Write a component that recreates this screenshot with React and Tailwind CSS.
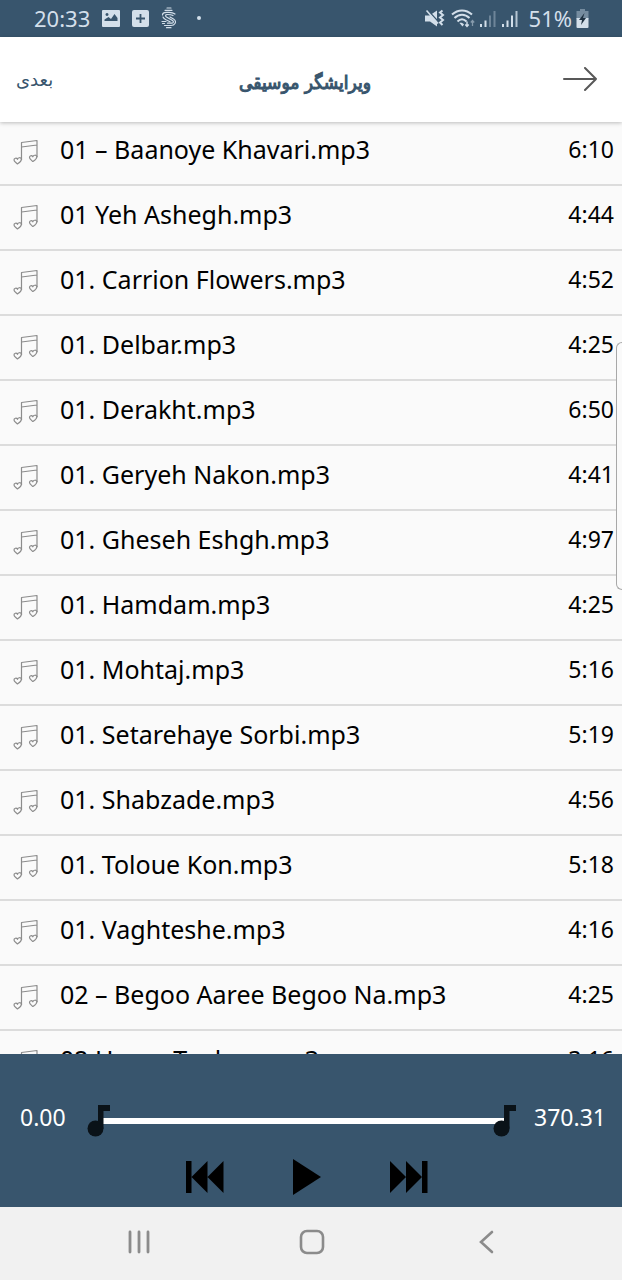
// ──────────────────────────────────────────────────
// App.jsx — Music editor: pick a track and trim it
// ──────────────────────────────────────────────────
// Top to bottom: phone status bar, page header, the
// scrolling track list, the trim player and the
// system navigation bar.
// ──────────────────────────────────────────────────

import { useState } from 'react';

const TRACKS = [
  { name: '01 – Baanoye Khavari.mp3', time: '6:10' },
  { name: '01 Yeh Ashegh.mp3', time: '4:44' },
  { name: '01. Carrion Flowers.mp3', time: '4:52' },
  { name: '01. Delbar.mp3', time: '4:25' },
  { name: '01. Derakht.mp3', time: '6:50' },
  { name: '01. Geryeh Nakon.mp3', time: '4:41' },
  { name: '01. Gheseh Eshgh.mp3', time: '4:97' },
  { name: '01. Hamdam.mp3', time: '4:25' },
  { name: '01. Mohtaj.mp3', time: '5:16' },
  { name: '01. Setarehaye Sorbi.mp3', time: '5:19' },
  { name: '01. Shabzade.mp3', time: '4:56' },
  { name: '01. Toloue Kon.mp3', time: '5:18' },
  { name: '01. Vaghteshe.mp3', time: '4:16' },
  { name: '02 – Begoo Aaree Begoo Na.mp3', time: '4:25' },
  { name: '02 Hosse Tanhoe.mp3', time: '3:16' },
];

const DURATION = 370.31;

// ── Status Bar ────────────────────────────────────
const StatusBar = () => (
  <div className="flex h-[37px] shrink-0 items-center justify-between bg-[#38556d] pr-8 pb-px pl-[34px] text-[22px] leading-none text-[#d3dfea]">
    <div className="flex items-center gap-3">
      <span>20:33</span>

      {/* Picture */}
      <svg width="18" height="17" viewBox="0 0 18 17" aria-hidden="true">
        <path
          fill="currentColor"
          fillRule="evenodd"
          d="M1 0h16a1 1 0 0 1 1 1v15a1 1 0 0 1-1 1H1a1 1 0 0 1-1-1V1a1 1 0 0 1 1-1ZM2.500 11h13V8l-3-4-3.500 5-2.500-2-4 2.500ZM5 3a1.500 1.500 0 1 0 .01 0Z"
        />
      </svg>

      {/* Plus tile */}
      <svg width="17" height="17" viewBox="0 0 17 17" aria-hidden="true">
        <rect width="17" height="17" rx="2" fill="currentColor" />
        <path d="M8.500 4v9M4 8.500h9" stroke="#38556d" strokeWidth="1.800" />
      </svg>

      {/* Striped S */}
      <svg width="16" height="22" viewBox="0 0 16 22" fill="none" stroke="currentColor" strokeWidth="1.200" strokeLinecap="round" aria-hidden="true">
        <path d="M6 1h4M4 3.300h7" />
        <path d="M14 7C12.500 5.800 10.500 5.300 8 5.300H5.500C3.500 5.300 1.500 6 1.500 8" />
        <path d="M12 8.500C10.500 7.500 8 7.500 6 7.500 4.500 7.500 4 9 5.500 10l6 3.500c1.500 1 1 2.700-.5 2.700H6.500" />
        <path d="M2 10c.5 1.500 1.500 2 3 2.800l4 2M9 10l3.500 2c2 1.200 2.500 3 1.500 4.500-.8 1.500-2 2-4 2H3.500" />
        <path d="M1 14.500h4M1.500 16.500h2M5.500 20.700h4.500" />
      </svg>

      <span className="ml-2 size-1 rounded-full bg-[#d3dfea]" />
    </div>

    <div className="flex items-center gap-1">
      {/* Muted, vibrating */}
      <svg width="20" height="19" viewBox="0 0 20 19" aria-hidden="true">
        <path fill="currentColor" d="M0 6.500h4.500L12 1.500v16l-7-5H0Z" />
        <path d="M2.500 1l12 13" stroke="#38556d" strokeWidth="1.600" />
        <path d="M1.500 1.500l11.500 13" stroke="currentColor" strokeWidth="1.600" />
        <path d="M17.500 1.500l-2.500 2 3 2.500-3 2.500 3 2.500-3 2.500 2.500 2.500" fill="none" stroke="currentColor" strokeWidth="2" />
      </svg>

      {/* Wi-Fi */}
      <svg className="ml-0.5" width="24" height="19" viewBox="0 0 24 19" fill="none" stroke="currentColor" strokeWidth="2" aria-hidden="true">
        <path d="M1 5.500c6-5.500 14-5.500 20 0M3.500 9c4.500-4.500 10.500-4.500 15 0M6.500 12.500c3-3 6-3 9 0" />
        <path d="M8.500 14l3 3.500 1.500-2c-1-1.500-3-2-4.500-1.500Z" fill="currentColor" stroke="none" />
        <path d="M16 12.500v4.500M14.300 15.500l1.700 2 1.700-2" strokeWidth="1.400" />
        <path d="M21.500 17v-5M19.800 13.500l1.700-2 1.700 2" strokeWidth="1.300" opacity=".5" />
      </svg>

      {/* Signal, one set of bars for each SIM */}
      <svg width="18" height="17" viewBox="0 0 18 17" fill="currentColor" aria-hidden="true">
        <path d="M1 14h2v3H1ZM5.500 10.500h2V17h-2Z" />
        <path d="M10 5.500h2V17h-2ZM14.500 1h2v16h-2Z" opacity=".35" />
      </svg>
      <svg width="18" height="17" viewBox="0 0 18 17" fill="currentColor" aria-hidden="true">
        <path d="M1 14h2v3H1ZM5.500 10.500h2V17h-2ZM10 5.500h2V17h-2Z" />
        <path d="M14.500 1h2v16h-2Z" opacity=".8" />
      </svg>

      <span className="ml-1.5">51%</span>

      {/* Battery, charging */}
      <svg width="14" height="19" viewBox="0 0 14 19" aria-hidden="true">
        <path d="M4 0h5v2h3.500v8H.5V2H4Z" fill="currentColor" opacity=".4" />
        <path d="M.5 9h12v9a1 1 0 0 1-1 1h-10a1 1 0 0 1-1-1Z" fill="currentColor" />
        <path d="M8.500 4L3 11h3l-1 5 5-7H7Z" fill="#1f3242" />
      </svg>
    </div>
  </div>
);

// ── Page Header ───────────────────────────────────
// Three columns, so the title stays in the middle
// whatever stands at its sides.
const Header = () => (
  <header className="relative z-10 grid h-[85px] shrink-0 grid-cols-3 items-center bg-white px-4 font-['DejaVu_Sans',sans-serif] text-[#38556d] shadow-[0_1px_4px_rgba(0,0,0,0.25)]">
    <button type="button" lang="fa" className="justify-self-start text-[18px]">
      بعدی
    </button>
    <h1 lang="fa" dir="rtl" className="mr-3 justify-self-center pt-1 font-['DejaVu_Sans_Condensed','DejaVu_Sans',sans-serif] text-[19px] leading-7 font-normal whitespace-nowrap [-webkit-text-stroke:1px_#38556d]">
      ویرایشگر موسیقی
    </h1>
    <button type="button" aria-label="Back" className="justify-self-end pr-2 text-[#585858]">
      <svg width="36" height="26" viewBox="0 0 36 26" fill="none" stroke="currentColor" strokeWidth="2" strokeLinecap="round" strokeLinejoin="round" aria-hidden="true">
        <path d="M2 12h32M23 1l11 11-11 11" />
      </svg>
    </button>
  </header>
);

// ── Track Row ─────────────────────────────────────
const NoteIcon = () => (
  <svg className="mt-1.5 shrink-0" width="26" height="26" viewBox="0 0 26 26" fill="none" stroke="#8c8c8c" strokeWidth="1.200" strokeLinejoin="round" aria-hidden="true">
    <path d="M8.500 21V3.500L24 1.500V18M8.500 8L24 6" />
    <path d="M8.500 20c-1-2-3.500-1.500-4 .3C3.500 18.500 1 19 1 21c0 1.500 2 2.500 3.500 4 2-1.300 4-2.500 4-5Z" />
    <path d="M24 17.500c-1-2-3.500-1.500-4.200.3-1-1.800-3.300-1.300-3.300.7 0 1.500 1.800 2.500 3.300 4 2-1.300 4.200-2.500 4.200-5Z" />
  </svg>
);

const TrackRow = ({ track }) => (
  <li className="h-[65px] shrink-0 border-b-2 border-[#dcdcdc] first:h-[64px]">
    <button type="button" className="flex h-full w-full items-center pr-2 pb-2 pl-[13px] text-left text-black">
      <NoteIcon />
      <span className="ml-[21px] flex-1 text-[25px] leading-8">{track.name}</span>
      <span className="text-[23px] leading-8">{track.time}</span>
    </button>
  </li>
);

// ── Trim Slider ───────────────────────────────────
// Two range inputs share one track. They are see-through;
// the note shapes show where each handle stands.
const Handle = ({ value }) => (
  <svg
    className="pointer-events-none absolute top-0 -ml-4"
    style={{ left: `${(value / DURATION) * 100}%` }}
    width="24"
    height="32"
    viewBox="0 0 24 32"
    fill="#0a1218"
    aria-hidden="true"
  >
    <circle cx="8.500" cy="23.500" r="8" />
    <path d="M11 0h12v6h-6.500v17.500H11Z" />
  </svg>
);

const TrimSlider = ({ start, end, setStart, setEnd }) => {
  const rangeClass =
    'pointer-events-none absolute inset-0 h-full w-full cursor-pointer opacity-0 [&::-webkit-slider-thumb]:pointer-events-auto';

  return (
    <div className="relative h-8 flex-1">
      <div className="absolute inset-x-0 top-[13px] h-[6px] bg-white" />
      <Handle value={start} />
      <Handle value={end} />
      <input
        type="range"
        aria-label="Start"
        min="0"
        max={DURATION}
        step="0.01"
        value={start}
        onChange={(e) => setStart(Math.min(Number(e.target.value), end))}
        className={rangeClass}
      />
      <input
        type="range"
        aria-label="End"
        min="0"
        max={DURATION}
        step="0.01"
        value={end}
        onChange={(e) => setEnd(Math.max(Number(e.target.value), start))}
        className={rangeClass}
      />
    </div>
  );
};

// ── Player ────────────────────────────────────────
const Player = () => {
  const [start, setStart] = useState(0);
  const [end, setEnd] = useState(DURATION);

  return (
    <section className="flex h-[153px] shrink-0 flex-col bg-[#38556d] pt-[49px]">
      <div className="flex items-center pr-4 pl-5 text-[23px] leading-7 text-white">
        <span className="w-[83px] pb-2">{start.toFixed(2)}</span>
        <TrimSlider start={start} end={end} setStart={setStart} setEnd={setEnd} />
        <span className="w-[97px] pb-2 pl-[25px]">{end.toFixed(2)}</span>
      </div>

      <div className="mt-5 flex items-center justify-center gap-[69px] pr-2 text-black">
        <button type="button" aria-label="Previous">
          <svg width="38" height="36" viewBox="0 0 38 36" fill="currentColor" aria-hidden="true">
            <path d="M0 2h5.500v32H0ZM21.500 2v32L5.500 18ZM37.500 2v32L21.500 18Z" />
          </svg>
        </button>
        <button type="button" aria-label="Play">
          <svg width="28" height="36" viewBox="0 0 28 36" fill="currentColor" aria-hidden="true">
            <path d="M0 0L28 18L0 36Z" />
          </svg>
        </button>
        <button type="button" aria-label="Next">
          <svg width="38" height="36" viewBox="0 0 38 36" fill="currentColor" aria-hidden="true">
            <path d="M0 2L16 18L0 34ZM16 2L32 18L16 34ZM32 2h5.500v32H32Z" />
          </svg>
        </button>
      </div>
    </section>
  );
};

// ── System Navigation ─────────────────────────────
const NavBar = () => (
  <nav className="grid h-[73px] shrink-0 grid-cols-[1fr_auto_1fr] items-center bg-[#f1f1f1] pb-1 pl-0.5 text-[#8b8b8b]">
    <button type="button" aria-label="Recents" className="mr-[148px] justify-self-end">
      <svg width="24" height="24" viewBox="0 0 24 24" stroke="currentColor" strokeWidth="2.800" strokeLinecap="round" aria-hidden="true">
        <path d="M3 2v20M12 2v20M21 2v20" />
      </svg>
    </button>
    <button type="button" aria-label="Home">
      <svg width="26" height="26" viewBox="0 0 26 26" fill="none" stroke="currentColor" strokeWidth="2.600" aria-hidden="true">
        <rect x="2" y="2" width="22" height="22" rx="6" />
      </svg>
    </button>
    <button type="button" aria-label="Back" className="ml-[150px] justify-self-start">
      <svg width="24" height="24" viewBox="0 0 24 24" fill="none" stroke="currentColor" strokeWidth="2.600" strokeLinecap="round" aria-hidden="true">
        <path d="M17 2L6 12l11 10" />
      </svg>
    </button>
  </nav>
);

// ── App ───────────────────────────────────────────
const App = () => (
  <div className="flex h-screen flex-col overflow-hidden bg-[#fafafa] font-['Noto_Sans',sans-serif]">
    <StatusBar />
    <Header />

    <main className="relative min-h-0 flex-1">
      <ul className="flex h-full flex-col overflow-x-hidden overflow-y-auto [scrollbar-width:none]">
        {TRACKS.map((track) => (
          <TrackRow key={track.name} track={track} />
        ))}
      </ul>

      {/* Edge panel handle, half off the screen */}
      <div className="absolute top-[220px] right-0 h-[248px] w-[6px] rounded-l-lg border border-r-0 border-[#a8a8a8] bg-[#fafafa]" />
    </main>

    <Player />
    <NavBar />
  </div>
);

export default App;
